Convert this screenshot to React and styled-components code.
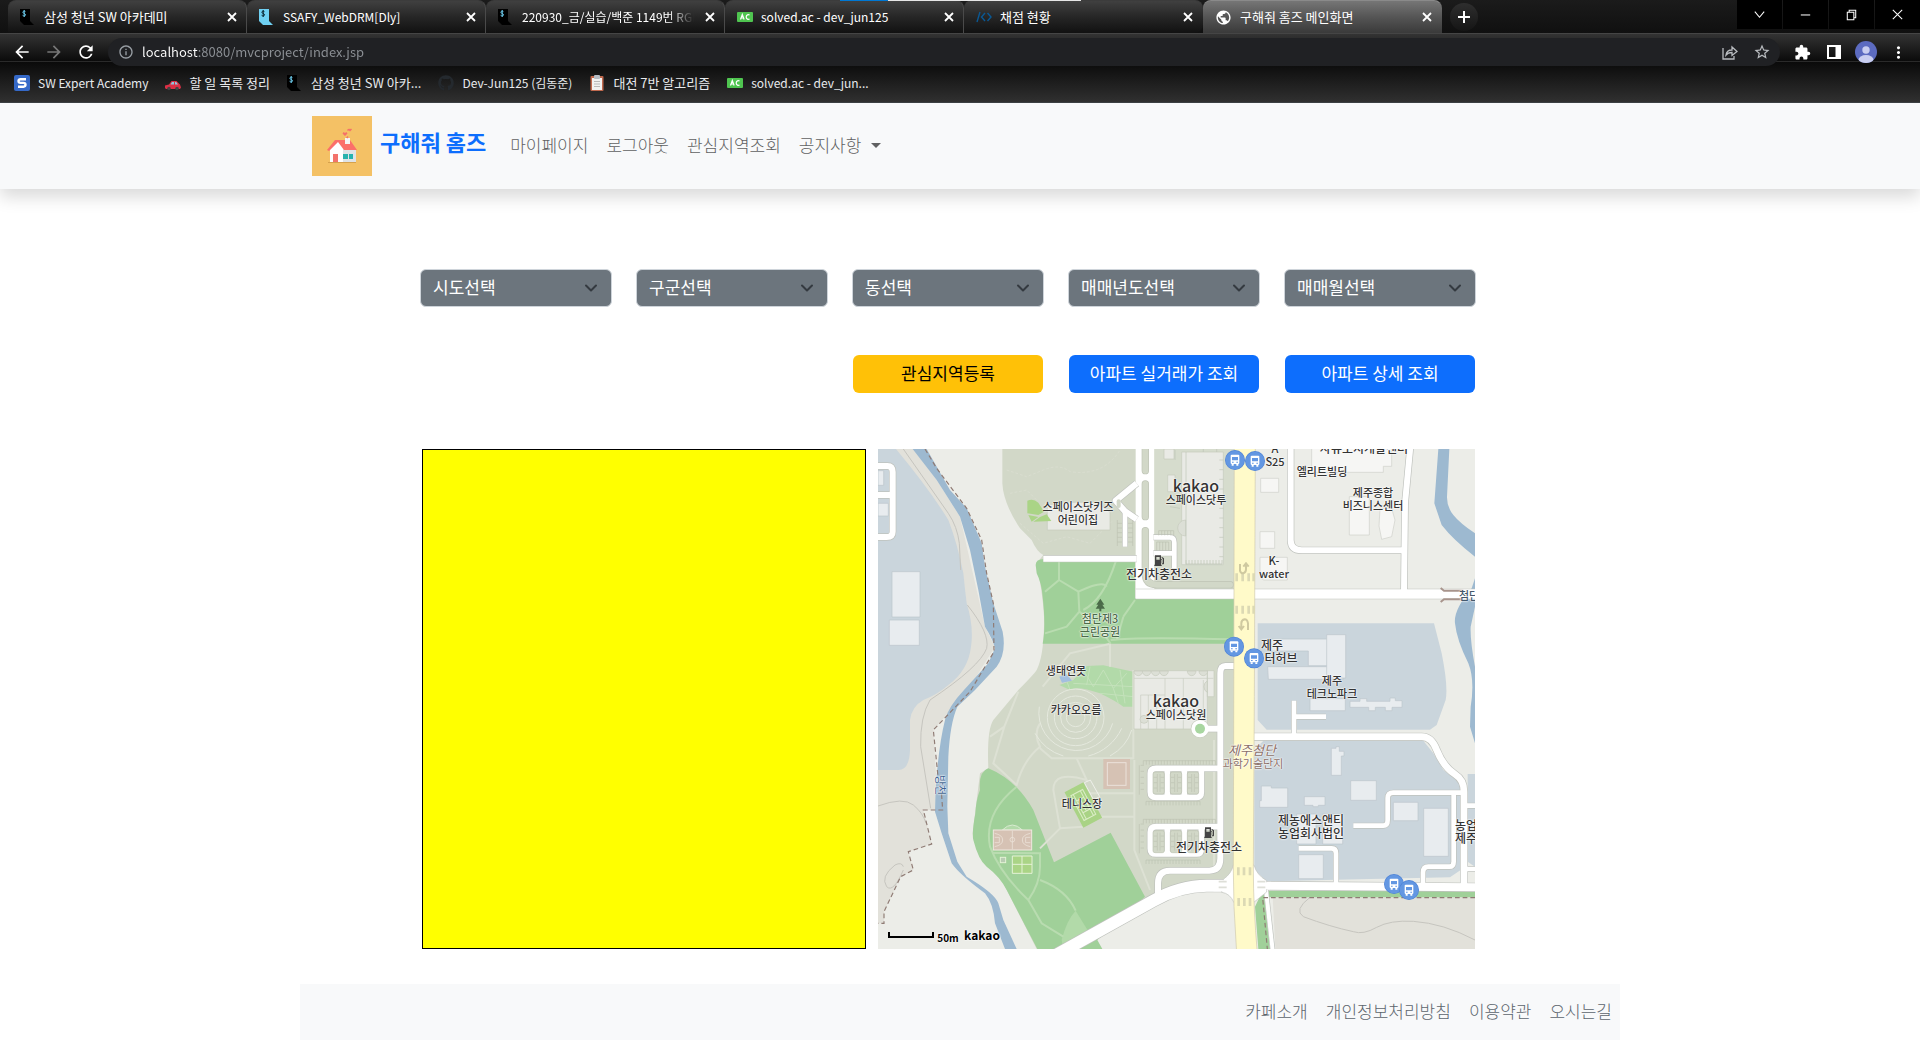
import React from "react";
import styled, { createGlobalStyle } from "styled-components";
import {
  MdArrowBack,
  MdArrowForward,
  MdRefresh,
  MdInfoOutline,
  MdStarBorder,
  MdExtension,
  MdMoreVert,
  MdPublic,
} from "react-icons/md";
import { FaGithub } from "react-icons/fa";

const GlobalStyle = createGlobalStyle`
  *, *::before, *::after { box-sizing: border-box; }
  body {
    margin: 0;
    background: #fff;
    color: #212529;
    font-family: "Noto Sans CJK KR", "Noto Sans", sans-serif;
    font-size: 17px;
    line-height: 24px;
  }
  button, select, input { font: inherit; }
  svg { display: block; }
`;

/* ---------- browser frame ---------- */

const Frame = styled.header`
  position: relative;
  color: #fff;
  font-size: 12px;
  line-height: 20px;
`;

const LoadBar = styled.div`
  position: absolute;
  top: 0;
  left: 840px;
  width: 241px;
  height: 1px;
  background: linear-gradient(90deg, #0078d4 48px, #e6e6e6 48px);
`;

const TabStrip = styled.div`
  display: flex;
  height: 33px;
  padding-left: 8px;
  background: linear-gradient(#1b1b1b, #101010);
`;

const TabItem = styled.div`
  display: flex;
  align-items: center;
  flex: 0 1 239px;
  min-width: 0;
  padding: 5px 6px 5px 12px;
  gap: 8px;
  border-top: 1px solid ${(p) => (p.$active ? "#8a8a8a" : "#3c3c3c")};
  border-right: 1px solid ${(p) => (p.$line ? "#4a4a4a" : "transparent")};
  border-radius: 8px 8px ${(p) => (p.$active || p.$line ? "0 0" : "8px 0")};
  background: ${(p) =>
    p.$active
      ? "linear-gradient(#767676, #555 50%, #3a3a3a)"
      : "linear-gradient(#404040, #262626 50%, #111)"};
`;

const TabTitle = styled.span`
  flex: 1;
  min-width: 0;
  overflow: hidden;
  white-space: nowrap;
  font-size: ${(p) => (p.$hangul ? 13 : 12)}px;
  ${(p) => p.$fade && "mask-image: linear-gradient(90deg, #000 85%, transparent);"}
`;

const IconButton = styled.button`
  display: grid;
  place-items: center;
  width: ${(p) => p.$w || 32}px;
  height: ${(p) => p.$h || 28}px;
  padding: 0;
  border: 0;
  border-radius: ${(p) => p.$round || 0}px;
  background: ${(p) => p.$bg || "none"};
  color: ${(p) => p.$color || "#fff"};
`;

const NewTab = styled.div`
  padding: 3px 8px;
`;

const WindowControls = styled.div`
  display: flex;
  gap: 1px;
  margin-left: auto;
`;

const BarArea = styled.div`
  border-top: 1px solid #454545;
  border-bottom: 1px solid #3c4043;
  background: linear-gradient(#333, #0b0b0b) 0 0 / 100% 27px no-repeat,
    linear-gradient(#2a2a2a, #2a2a2a) 0 27px / 100% 1px no-repeat,
    linear-gradient(#0a0a0a, #303030) 0 28px / 100% 40px no-repeat;
`;

const Toolbar = styled.div`
  display: flex;
  align-items: center;
  padding: 4px 6px 0;
`;

const Omnibox = styled.div`
  display: flex;
  align-items: center;
  flex: 1;
  height: 28px;
  margin: 0 6px;
  padding: 0 2px 0 10px;
  border-radius: 14px;
  background: #202124;
  color: #9aa0a6;
`;

const Address = styled.input.attrs({ type: "text" })`
  flex: 1;
  min-width: 0;
  height: 24px;
  margin-left: 8px;
  padding: 0 0 2px;
  border: 0;
  outline: 0;
  font-size: 13px;
  color: #9aa0a6;
  -webkit-text-fill-color: transparent;
  background: linear-gradient(90deg, #fff 56px, #8d9196 56px);
  background-clip: text;
`;

const Bookmarks = styled.nav`
  display: flex;
  height: 36px;
  padding: 0 14px 2px;
  gap: 17px;
  align-items: center;
`;

const Bookmark = styled.a`
  display: flex;
  align-items: center;
  gap: 8px;
  color: #e8eaed;
  font-size: ${(p) => (p.$hangul ? 13 : 12)}px;
  text-decoration: none;
  white-space: nowrap;
`;

const SsafyIcon = ({ page = "#000", ink = "#6fd0f2" }) => (
  <svg width="16" height="16" viewBox="0 0 16 16" aria-hidden="true">
    <path d="M0 0h10v12l4 4H4L0 12z" fill={page} />
    <path d="M5.400 2.600C4.600 1.800 2.900 2 2.900 3.300c0 1.400 2.600 1 2.600 2.500 0 1.300-2 1.400-2.900.5M4.200 1v7" fill="none" stroke={ink} />
  </svg>
);

const AcIcon = () => (
  <svg width="16" height="16" viewBox="0 0 16 16" aria-hidden="true">
    <rect y="3" width="16" height="10" rx="1" fill="#4fc550" />
    <path d="M3.500 10.500l1.800-5 1.800 5M4 9h2.500M12.500 6.200c-1-1-3.300-.6-3.300 1.800s2.300 2.800 3.300 1.800" fill="none" stroke="#fff" strokeWidth="1.200" />
  </svg>
);

const CodeIcon = () => (
  <svg width="16" height="16" viewBox="0 0 16 16" fill="none" stroke="#0a5894" strokeWidth="1.400" aria-hidden="true">
    <path d="M1 13L4 3M9 4L5.500 8l3.500 4M11.500 4L15 8l-3.500 4" />
  </svg>
);

const SweaIcon = () => (
  <svg width="16" height="16" viewBox="0 0 16 16" aria-hidden="true">
    <rect width="16" height="16" rx="2" fill="#3569c8" />
    <path d="M12 4.300H6.500q-2 0-2 1.800t2 1.800h3q2 0 2 1.900t-2 1.900H4" fill="none" stroke="#fff" strokeWidth="2.400" />
  </svg>
);

const CarIcon = () => (
  <svg width="16" height="16" viewBox="0 0 16 16" aria-hidden="true">
    <path d="M0 10.500l4-1L6.500 6h5L15 9.500l1 3-1 1.500H1L0 13z" fill="#dc2f45" />
    <path d="M5.500 9.500L7 7h2v2.500zM10 7h1.200L13 9.500h-3z" fill="#8fc6de" />
    <circle cx="4" cy="13.500" r="1.800" fill="#444" />
    <circle cx="12" cy="13.500" r="1.800" fill="#444" />
  </svg>
);

const ClipIcon = () => (
  <svg width="16" height="16" viewBox="0 0 16 16" aria-hidden="true">
    <rect x="1.500" y="1" width="13" height="15" rx="1" fill="#c0694e" />
    <rect x="3" y="3" width="10" height="12" fill="#f1f1f1" />
    <rect x="5" y="0" width="6" height="4" rx="1" fill="#b5bcc4" />
    <path d="M5 6.500h6M5 9h6M5 11.500h6" stroke="#b9b9b9" />
  </svg>
);

const TABS = [
  { title: "삼성 청년 SW 아카데미", icon: <SsafyIcon />, hangul: true },
  { title: "SSAFY_WebDRM[Dly]", icon: <SsafyIcon page="#6fd0f2" ink="#06202c" /> },
  { title: "220930_금/실습/백준 1149번 RGB거리", icon: <SsafyIcon />, fade: true },
  { title: "solved.ac - dev_jun125", icon: <AcIcon /> },
  { title: "채점 현황", icon: <CodeIcon />, hangul: true },
  { title: "구해줘 홈즈 메인화면", icon: <MdPublic size={17} />, active: true, hangul: true },
];

const BOOKMARKS = [
  { title: "SW Expert Academy", icon: <SweaIcon /> },
  { title: "할 일 목록 정리", icon: <CarIcon />, hangul: true },
  { title: "삼성 청년 SW 아카...", icon: <SsafyIcon />, hangul: true },
  { title: "Dev-Jun125 (김동준)", icon: <FaGithub size={16} color="#24292e" /> },
  { title: "대전 7반 알고리즘", icon: <ClipIcon />, hangul: true },
  { title: "solved.ac - dev_jun...", icon: <AcIcon /> },
];

const WINDOW_ICONS = [
  ["탭 검색", "M3 5l5 6 5-6"],
  ["최소화", "M3 8.500h10"],
  ["이전 크기로 복원", "M3.500 5.500h7v8h-7zM5.500 5.500v-2h7v8h-2"],
  ["창 닫기", "M3 3l10 10M13 3L3 13"],
];

function BrowserFrame() {
  return (
    <Frame>
      <TabStrip>
        {TABS.map((t, i) => (
          <TabItem key={t.title} $active={t.active} $line={i < 4}>
            {t.icon}
            <TabTitle $fade={t.fade} $hangul={t.hangul}>{t.title}</TabTitle>
            <IconButton $w={16} $h={16} aria-label="탭 닫기">
              <svg width="10" height="10" viewBox="0 0 10 10" stroke="#fff" strokeWidth="1.800">
                <path d="M1 1l8 8M9 1L1 9" />
              </svg>
            </IconButton>
          </TabItem>
        ))}
        <NewTab>
          <IconButton $w={28} $round={14} $bg="linear-gradient(#2e2e2e, #151515)" aria-label="새 탭">
            <svg width="12" height="12" viewBox="0 0 12 12" stroke="#fff" strokeWidth="2">
              <path d="M6 0v12M0 6h12" />
            </svg>
          </IconButton>
        </NewTab>
        <WindowControls>
          {WINDOW_ICONS.map(([name, d]) => (
            <IconButton key={name} $w={45} $h={29} $bg="#000" aria-label={name}>
              <svg width="15" height="15" viewBox="0 0 16 16" fill="none" stroke="#fff" strokeWidth="1.100">
                <path d={d} />
              </svg>
            </IconButton>
          ))}
        </WindowControls>
      </TabStrip>
      <LoadBar />
      <BarArea>
        <Toolbar>
          <IconButton aria-label="뒤로"><MdArrowBack size={20} /></IconButton>
          <IconButton $color="#777" aria-label="앞으로"><MdArrowForward size={20} /></IconButton>
          <IconButton aria-label="새로고침"><MdRefresh size={20} /></IconButton>
          <Omnibox>
            <MdInfoOutline size={16} />
            <Address aria-label="주소창" defaultValue="localhost:8080/mvcproject/index.jsp" />
            <IconButton $color="#b9bcc0" aria-label="공유">
              <svg width="16" height="16" viewBox="0 0 16 16" fill="none" stroke="currentColor" strokeWidth="1.300">
                <path d="M1 4v11h11v-3M4 11c.5-4 3-5 6-5V3l5 4.500-5 4V8.500c-3 0-4.500.5-6 2.500z" />
              </svg>
            </IconButton>
            <IconButton $color="#b9bcc0" aria-label="북마크에 추가"><MdStarBorder size={18} /></IconButton>
          </Omnibox>
          <IconButton aria-label="확장 프로그램"><MdExtension size={17} /></IconButton>
          <IconButton aria-label="측면 패널">
            <svg width="14" height="14" viewBox="0 0 14 14">
              <path fillRule="evenodd" d="M0 0h14v14H0zM2 2v10h6.500V2z" fill="#fff" />
            </svg>
          </IconButton>
          <IconButton aria-label="프로필">
            <svg width="22" height="22" viewBox="0 0 22 22">
              <clipPath id="avatar"><circle cx="11" cy="11" r="11" /></clipPath>
              <g clipPath="url(#avatar)">
                <rect width="22" height="22" fill="#5c6bc0" />
                <circle cx="11" cy="9" r="3.700" fill="#c9cef0" />
                <ellipse cx="11" cy="19" rx="7.500" ry="5" fill="#c9cef0" />
              </g>
            </svg>
          </IconButton>
          <IconButton aria-label="메뉴"><MdMoreVert size={19} /></IconButton>
        </Toolbar>
        <Bookmarks>
          {BOOKMARKS.map((b) => (
            <Bookmark key={b.title} href="#" $hangul={b.hangul}>{b.icon}{b.title}</Bookmark>
          ))}
        </Bookmarks>
      </BarArea>
    </Frame>
  );
}

/* ---------- site navigation ---------- */

const NavBar = styled.nav`
  background: #f8f9fa;
  box-shadow: 0 8px 16px rgba(0, 0, 0, 0.15);
`;

const NavInner = styled.div`
  display: flex;
  align-items: center;
  gap: 2px;
  max-width: 1320px;
  margin: 0 auto;
  padding: 13px 12px;
`;

const Brand = styled.a`
  display: flex;
  align-items: center;
  gap: 8px;
  margin-right: 14px;
  color: #0d6efd;
  font-size: 22px;
  font-weight: 700;
  line-height: 30px;
  text-decoration: none;
`;

const BrandName = styled.span`
  padding-bottom: 10px;
`;

const NavLink = styled.a`
  display: flex;
  align-items: center;
  gap: 10px;
  padding: 7px 8px 9px;
  color: #606162;
  font-weight: 300;
  text-decoration: none;
`;

const Caret = styled.span`
  border: 5px solid transparent;
  border-top-color: currentColor;
  border-bottom: 0;
`;

const HouseLogo = () => (
  <svg width="60" height="60" viewBox="0 0 60 60" aria-hidden="true">
    <rect width="60" height="60" fill="#f4c165" />
    <path d="M16 46h28v1H16z" fill="#d6a14c" />
    <path d="M18 33l8-9 6 9v13H18z" fill="#fff" />
    <path d="M31 33h13v13H31z" fill="#dfe3e6" />
    <path d="M23 24h15l7 10H32l-6-8-9 9-2-1z" fill="#fb6f6a" />
    <path d="M33 22h5v6h-5z" fill="#f4f4f4" />
    <path d="M21 38h5v8h-5z" fill="#f3736c" />
    <path d="M31 38h5v5h-5zM37 38h4v5h-4z" fill="#27b3ae" />
    <path d="M33 20l-2.500-2.500 1.200-1.500 1.300 1 1.300-1 1.200 1.500zM38 15.500L36 13.500l1-1 1 .8 1-.8 1 1zM34 21.500l1.500-1.500 1 1-1 1.500zM35 14l1-1 1 1-1 1z" fill="#f4706a" />
  </svg>
);

/* ---------- page body ---------- */

const Main = styled.main`
  max-width: 1320px;
  margin: 0 auto;
  padding: 80px 144px 35px 120px;
`;

const FilterGrid = styled.div`
  display: grid;
  grid-template-columns: repeat(5, 1fr);
  gap: 48px 24px;
`;

const SelectBox = styled.div`
  position: relative;
`;

const Select = styled.select`
  appearance: none;
  display: block;
  width: 100%;
  height: 38px;
  padding: 0 36px 2px 12px;
  border: 1px solid #ced4da;
  border-radius: 6px;
  background: #6c757d;
  color: #fff;
`;

const SelectArrow = styled.svg`
  position: absolute;
  top: 13px;
  right: 13px;
  pointer-events: none;
`;

const ActionButton = styled.button`
  grid-column-start: ${(p) => p.$column};
  height: 38px;
  margin: 0 1px;
  padding: 0 12px 2px;
  border: 0;
  border-radius: 6px;
  background: ${(p) => (p.$warning ? "#ffc107" : "#0d6efd")};
  color: ${(p) => (p.$warning ? "#000" : "#fff")};
  white-space: nowrap;
`;

const Panels = styled.section`
  display: grid;
  grid-template-columns: 444fr 597fr;
  gap: 12px;
  margin-top: 56px;
  padding: 0 1px 0 2px;
`;

const ResultPanel = styled.div`
  border: 1px solid #000;
  background: #ff0;
`;

const MapPanel = styled.div`
  position: relative;
  height: 500px;
  overflow: hidden;
  background: #ecede8;
`;

const MapLabel = styled.span`
  position: absolute;
  transform: translate(-50%, -50%);
  color: ${(p) => p.$color || "#333"};
  font-size: ${(p) => p.$size || 11}px;
  font-weight: ${(p) => p.$weight || 500};
  font-style: ${(p) => (p.$italic ? "italic" : "normal")};
  writing-mode: ${(p) => (p.$vertical ? "vertical-rl" : "horizontal-tb")};
  text-orientation: sideways;
  line-height: 13px;
  text-align: center;
  white-space: pre;
  text-shadow: 0 0 2px #fff, 0 0 2px #fff, 0 0 1px #fff;
`;

const FooterBar = styled.footer`
  display: flex;
  justify-content: flex-end;
  flex-wrap: wrap;
  gap: 18px;
  max-width: 1320px;
  margin: 0 auto;
  padding: 15px 8px 17px;
  background: #f8f9fa;
`;

const FooterLink = styled.a`
  color: #5c656d;
  font-weight: 300;
  text-decoration: none;
`;

/* ---------- map drawing ---------- */

const LAND = "#d2d8c8";
const GREEN = "#a0d099";
const BLUE = "#cad5dc";
const RIVER = "#9db9d0";
const BEIGE = "#e2e1da";

const ROADS = [
  [18, "M24 78H52Q68 78 68 96V275Q68 291 50 291H24M24 165H66"],
  [18, "M520 356H800"],
  [14, "M765 214V320"],
  [18, "M800 130L737 182L765 214L800 238"],
  [14, "M850 292H900Q913 292 913 308V385M850 340H913"],
  [18, "M1262 20V300Q1262 331 1295 331H1600"],
  [18, "M1621 20L1605 190L1602 455"],
  [28, "M797 462H1830"],
  [20, "M1150 890H1655Q1685 890 1700 930Q1720 980 1755 1003Q1782 1020 1782 1055V1340"],
  [14, "M1272 782V888M1272 830H1368"],
  [14, "M1450 1157H1540Q1553 1157 1553 1140V1075Q1553 1058 1570 1058H1780"],
  [14, "M1751 1062V1265Q1751 1280 1738 1280H1675Q1659 1280 1659 1298V1335"],
  [14, "M1286 1225H1385Q1398 1225 1398 1240V1335"],
  [14, "M1785 1097H1830M1785 1287H1830"],
  [18, "M1095 678H1066Q1051 678 1051 700V1255Q1051 1292 1018 1292H900Q864 1292 864 1330V1362"],
  [18, "M990 866H1050"],
  [17, "M1050 985H858Q841 985 841 1000V1056Q841 1072 858 1072H980Q994 1072 994 1056V985M892 985V1072M943 985V1072"],
  [17, "M1050 1160H858Q841 1160 841 1176V1226Q841 1242 858 1242H980Q994 1242 994 1226V1160M892 1160V1242M943 1160V1242"],
  [36, "M520 1566L850 1382Q930 1337 1010 1337H1100"],
  [24, "M1145 1337L1300 1338L1830 1342"],
  [12, "M1188 1350L1209 1540"],
];

const COMMERCIAL = [
  "M1172 115h54v42h-54zM1170 275h44v50h-44zM1170 352h82v68h-72l-10-12z",
  "M1438 170h60v115h-60zM1530 205h35l10 35-10 50-30 8-8-40z",
  "M1325 20h240v59h-25v18h-215z",
];

const BUILDINGS = [
  "M66 395h84v136H66zM58 540h90v76H58zM24 92h17v44H24zM24 190h31v38H24z",
  "M1195 597h217v15l-32 10 27 55h-92v-44h-120zM1193 680h210l17 38h-225z",
  "M1370 584h57v130h-57zM1320 776h106v36h-106zM1440 784h30v-8h20v8h70v-10h16v8h20v20h-30v10h-20v-10h-30v10h-20v-10h-56z",
  "M1384 925h14v-5h10v14h14v14h-8v58h-30zM1442 1022h77v59h-77z",
  "M1174 1038h30v6h49v58h-84v-20h5zM1303 1070h62v26h-20v4h-16v-4h-26z",
  "M1570 1087h74v55h-74zM1661 1105h74v144h-74zM1286 1244h74v72h-74z",
  "M1280 1122h58v90h-58zM1358 1122h60v90h-60z",
];

const CAMPUS = [
  "M792 692h220v175H792zM1012 692h20v78h-20z",
  "M935 36h125v338H935z",
  "M532 195l60-8h90l38 30v53H532z",
  "M882 27h30v30h-30zM893 105h22v50h-22z",
];

const Road = ({ w, d, color }) => (
  <path d={d} fill="none" stroke={color} strokeWidth={w} strokeLinejoin="round" />
);

const STOPS = [[1095, 60], [1155, 63], [1092, 620], [1152, 655], [1572, 1332], [1617, 1350]];

const BusStop = ({ x, y }) => (
  <g transform={`translate(${x} ${y})`}>
    <circle r="30" fill="#4f83d6" />
    <circle r="28" fill="#6397e2" />
    <rect x="-13" y="-16" width="26" height="28" rx="3" fill="#fff" />
    <path d="M-10 12h6v5h-6zM4 12h6v5h-6z" fill="#fff" />
    <path d="M-9 -9H9V1H-9zM-9 5h5v3h-5zM4 5h5v3h-5z" fill="#6397e2" />
  </g>
);

const Charger = ({ x, y }) => (
  <path
    transform={`translate(${x} ${y})`}
    fillRule="evenodd"
    fill="#444"
    d="M2 0H20V28H22V32H0V28H2zM6 5V13H16V5zM22 4L29 9V25Q25 30 22 24V14H20V12H24V24H26V11L22 8z"
  />
);

const Comb = ({ x, y, n, h, step = 9 }) => (
  <path
    d={`M${x} ${y}h${n * step}` + Array.from({ length: n + 1 }, (_, i) => `M${x + i * step} ${y}v${h}`).join("")}
    fill="none"
    stroke="#bcc2b2"
    strokeWidth="2"
  />
);

function MapDrawing() {
  return (
    <svg width="100%" height="100%" viewBox="24 27 1791 1500" preserveAspectRatio="xMidYMid slice" aria-hidden="true">
      <rect x="-400" width="2600" height="1600" fill="#ecede8" />

      <path fill={BEIGE} d="M24 27H130L200 120L270 230L345 560L375 620L290 755L190 870L204 1110H160L185 1212L115 1235L130 1290L92 1310L42 1415V1450H24z" />
      <path fill={BLUE} d="M24 27H78Q180 150 235 240Q262 310 280 400Q285 450 290 490Q312 560 303 620Q295 690 235 735Q200 765 160 780Q125 800 120 840V930Q118 990 85 990H24z" />
      <path fill="none" stroke="#c6c5bf" strokeWidth="3" d="M100 27L235 220Q262 260 268 310L272 390M292 495Q360 580 350 625Q330 680 180 780Q150 830 152 920L182 1105M24 1098Q100 1070 130 1095Q160 1120 168 1150M100 1280Q95 1265 75 1275Q30 1310 50 1340Q70 1360 100 1290" />
      <path fill={RIVER} d="M128 27L200 120L270 230L300 330L325 450L345 560Q370 600 375 625L355 670L282 750Q235 800 225 840Q205 920 197 1050L195 1115L215 1180L245 1270Q270 1305 345 1360Q370 1390 375 1450L405 1527H440L400 1440L385 1390Q375 1360 290 1310L262 1265L235 1180L232 1100L235 950Q240 850 262 800L315 750L380 680Q410 640 398 575L370 490L345 380L335 310L290 205L240 150L170 27z" />
      <path fill={RIVER} d="M1705 27L1693 190L1715 255Q1750 300 1815 350V280Q1770 250 1750 225Q1730 200 1731 170L1738 27zM1815 415L1805 445Q1750 510 1755 550Q1760 600 1795 670Q1815 720 1802 800L1800 860L1815 910V680Q1800 600 1802 560L1815 500z" />

      <path fill={LAND} d="M397 27V130Q400 190 450 265L485 300Q500 335 520 345L500 370Q525 500 522 560Q520 650 500 690Q490 705 445 750L370 840Q350 870 355 985L330 1000L308 1180Q310 1220 400 1330L500 1527H560L850 1370L1092 1330V27z" />
      <path fill={GREEN} d="M497 375Q497 357 522 357H795V475H1092V611H518Q528 560 518 470Q515 430 500 400z" />
      <path fill={GREEN} d="M355 985Q325 995 330 1050Q318 1080 316 1120Q305 1180 310 1200Q325 1260 350 1280Q390 1310 410 1350L502 1527H697L682 1500L825 1370L722 1178L552 1267L490 1110Q440 1020 355 985z" />
      <path fill="#b2daa9" d="M568 735L610 720L650 678L700 676L790 695V800H760Q740 785 690 760Q620 735 600 750zM575 1500Q590 1440 617 1412L665 1490L610 1527H580z" />
      <path fill="none" stroke="#c4e2bb" strokeWidth="3" d="M640 690L670 740L700 690L730 745L770 700M610 730L790 740M690 760L790 770M730 745L745 790M660 680L650 735M750 690L765 790M590 722L600 750" />
      <path fill="#a2bfe0" d="M568 710l22-8 16 20-30 6z" />

      <path fill="none" stroke="#b9dcb0" strokeWidth="6" d="M567 365V420L525 455M567 420L625 455Q700 420 710 440M737 365Q700 480 640 510M625 455L628 515L590 560L525 580M628 515Q690 560 722 611M760 530L795 480M760 530L740 600M722 600Q800 590 1092 598M440 1040Q340 1120 360 1220Q390 1300 475 1380Q510 1330 510 1280V1240L370 1238M475 1380L515 1450L580 1490M510 1320Q590 1350 617 1412" />
      <path fill="none" stroke="#dde1d4" strokeWidth="6" d="M720 611V680M518 740L600 640L718 612M360 890L403 860M445 755L403 860L370 970L440 1035Q460 960 510 920Q490 880 510 850M510 925L545 955H790V690M620 955L650 1020Q550 990 550 1050L570 1165L510 1225M570 1165L640 1160M690 1130H795M660 1060H795M793 960V1230L840 1350M1032 1300V900" />
      <g fill="none" stroke="#e5e9de" strokeWidth="3">
        <circle cx="617" cy="832" r="28" />
        <circle cx="617" cy="832" r="45" />
        <circle cx="617" cy="832" r="64" />
        <circle cx="617" cy="832" r="85" />
        <path d="M508 800A113 113 0 0 0 728 850M495 880A145 145 0 0 0 580 948M655 948A150 150 0 0 0 755 865M720 948Q770 920 785 870" />
      </g>
      <path fill="none" stroke="#dce0d3" strokeWidth="2" strokeDasharray="8 6" d="M410 90L470 110L520 90Q570 70 600 95Q700 110 750 30M420 160L470 150L500 180M450 250L520 310L590 290L660 310L730 240" />

      <path fill={BLUE} d="M1163 550H1692L1715 640Q1735 740 1727 780L1700 855L1680 869H1190L1163 840zM1180 902H1660L1690 940L1720 990L1772 1030V1290L1740 1312L1190 1324L1153 1290V930zM1793 1002H1815V1280L1793 1265z" />
      <path fill={BEIGE} d="M1208 1372H2200V1600H1220z" />
      <path fill={GREEN} d="M1195 1352H2200V1372H1195zM1155 1400L1172 1364H1182L1200 1527H1165z" />
      <path fill="none" stroke="#c6c5bf" strokeWidth="3" d="M1320 1372Q1270 1410 1300 1430Q1380 1460 1450 1475Q1480 1485 1520 1462Q1560 1440 1630 1444Q1720 1450 1815 1500" />

      <path d="M797 27H853V475H797z" fill="#fff" />
      <path fill="#d6dccd" d="M854 27H1092V420L1076 435H870L854 400z" />
      <path fill="none" stroke="#bfc4b6" strokeWidth="22" d="M826 20V92M826 132V230M826 272V400Q826 434 860 434H1080" strokeLinecap="round" />
      <path fill="none" stroke={LAND} strokeWidth="18" d="M826 20V92M826 132V230M826 272V400Q826 434 860 434H1080" strokeLinecap="round" />

      {COMMERCIAL.map((d) => <path key={d} d={d} fill="#f6f6f4" stroke="#cfd0ca" strokeWidth="2" />)}
      {BUILDINGS.map((d) => <path key={d} d={d} fill="#e8ecef" stroke="#bcc5cc" strokeWidth="2" />)}
      {CAMPUS.map((d) => <path key={d} d={d} fill="#e9eae5" stroke="#c5cabd" strokeWidth="2" />)}
      <path fill="#aad486" d="M472 182Q490 174 505 188L522 215L505 225L472 220zM475 225l30 6-20 14zM490 245l20-14 20-8 14 20z" />
      <path fill="none" stroke="#c8ccc1" strokeWidth="2" d="M792 715H1030M885 715V867M940 715V867M812 765H885M812 765V867M835 765V867M860 765V867M1000 720V867" />
      <g fill="#dcdfd6" stroke="#c5cabd" strokeWidth="2">
        {[805, 830, 857, 882, 965, 1000].map((x) => <path key={x} d={`M${x - 13} 693A13 14 0 0 0 ${x + 13} 693z`} />)}
        <path d="M1012 723A15 18 0 0 0 1012 757z" />
        <circle cx="822" cy="838" r="12" />
        <path d="M947 240A24 24 0 0 0 947 288z" />
      </g>
      <path fill="none" stroke="#c0c5b8" strokeWidth="2" d="M915 30V60M948 36V374M1000 27V36M1040 27V36M900 200L930 205" />
      <Comb x={948} y={372} n={12} h={-12} />
      {[0, 1, 2, 3, 4, 5, 6, 7, 8, 9, 10].map((i) => (
        <path key={i} d={`M1048 ${60 + i * 29}h12`} stroke="#c0c5b8" strokeWidth="2" />
      ))}

      {ROADS.map(([w, d]) => <Road key={d} d={d} w={w + 4} color="#bfc2bd" />)}
      <circle cx="990" cy="866" r="28" fill="#c9cec0" />
      {ROADS.map(([w, d]) => <Road key={d} d={d} w={w} color="#fff" />)}
      <circle cx="990" cy="866" r="26" fill="#fff" />
      <circle cx="990" cy="866" r="15" fill="#a8d6a0" />
      <path fill="#fff" stroke="#bfc2bd" strokeWidth="2" d="M1060 1318Q1085 1300 1090 1275H1152Q1160 1305 1190 1322V1356L1150 1388H1092Q1080 1360 1055 1357z" />
      <path fill="#fff" d="M1030 1321H1070V1354H1030zM1180 1327H1200V1348H1180z" />

      {[[808, 962], [808, 1138]].map(([x, y]) => (
        <g key={y}>
          <Comb x={x + 12} y={y} n={24} h={12} />
          <Comb x={x + 20} y={y + 122} n={18} h={12} />
          <path d={`M${x} ${y + 14}v88M${x + 4} ${y + 14}h10M${x + 4} ${y + 32}h10M${x + 4} ${y + 50}h10M${x + 4} ${y + 68}h10M${x + 4} ${y + 86}h10`} stroke="#bcc2b2" strokeWidth="2" />
          {[848, 900, 951].map((c) => (
            <g key={c} fill={LAND} stroke="#bcc2b2" strokeWidth="2">
              <rect x={c + 1} y={y + 34} width="34" height="66" rx="6" />
              <path d={`M${c + 14} ${y + 40}v54M${c + 22} ${y + 40}v54M${c + 3} ${y + 50}h10M${c + 3} ${y + 66}h10M${c + 3} ${y + 82}h10M${c + 24} ${y + 50}h10M${c + 24} ${y + 66}h10M${c + 24} ${y + 82}h10`} />
            </g>
          ))}
        </g>
      ))}
      <Comb x={866} y={272} n={5} h={14} />
      <Comb x={860} y={306} n={4} h={26} />
      <path d="M742 240v78M742 250h14M742 264h14M742 278h14M742 292h14M742 306h14M788 240v78M774 250h14M774 264h14M774 278h14M774 292h14M774 306h14" stroke="#bcc2b2" strokeWidth="2" />
      <rect x="740" y="178" width="12" height="26" rx="6" fill={LAND} />
      <path d="M795 155Q770 165 775 195L795 212z" fill={LAND} />

      <path fill="#fffac9" stroke="#cfc9ad" strokeWidth="2" d="M1093 20H1156L1153 770L1150 1290Q1150 1400 1162 1540H1100L1092 1400L1090 1290z" />
      <g stroke="#dcd9b4" strokeWidth="8">
        <path d="M1100 400v24M1118 400v24M1136 400v24M1151 400v24M1100 497v24M1118 497v24M1136 497v24M1151 497v24M1105 1282v24M1122 1282v24M1140 1282v24M1106 1374v24M1123 1374v24M1140 1374v24" />
        <path d="M1046 1325h24M1046 1342h24M1162 1325h24M1162 1342h24" strokeWidth="5" stroke="#dedfd8" />
      </g>
      <path fill="none" stroke="#cfc9a0" strokeWidth="6" d="M1110 372V392Q1112 400 1120 400Q1128 398 1128 388V372M1120 380L1128 370L1136 380M1134 570V550Q1132 538 1124 538Q1114 540 1114 550V566M1106 558L1114 568L1122 558" />

      <rect x="700" y="957" width="80" height="90" fill="#d6c2b4" />
      <rect x="712" y="968" width="56" height="68" fill="none" stroke="#ebe2da" strokeWidth="3" />
      <path d="M643 1028l18-8 28 50-18 10z" fill="none" stroke="#eef0ea" strokeWidth="3" />
      <g transform="translate(640 1095) rotate(-28)">
        <rect x="-32" y="-60" width="64" height="120" fill="#a9d385" />
        <path d="M-20 -42H20V42H-20zM-12 -42V42M12 -42V42M-20 0H20M-12 -20H12M-12 20H12M0 -20V20" fill="none" stroke="#dcedc8" strokeWidth="3" />
      </g>
      <path d="M397 1170Q427 1140 457 1170z" fill="#b2daa9" stroke="#d8ebd0" strokeWidth="3" />
      <rect x="370" y="1170" width="115" height="60" fill="#d6c2b4" stroke="#f0e8e0" strokeWidth="3" />
      <path d="M427 1172V1228M374 1180Q398 1185 398 1200Q398 1215 374 1220M481 1180Q457 1185 457 1200Q457 1215 481 1220M374 1192h14v16h-14M481 1192h-14v16h14" fill="none" stroke="#f0e8e0" strokeWidth="2" />
      <circle cx="427" cy="1199" r="7" fill="none" stroke="#f0e8e0" strokeWidth="2" />
      <path d="M427 1248h59v52h-59zM427 1273h59M456 1248v52" fill="#aad486" stroke="#e4f2d6" strokeWidth="3" />
      <rect x="391" y="1252" width="16" height="16" fill="#b9ccb3" stroke="#e4f2d6" strokeWidth="3" />

      <path fill="none" stroke="#8f7b74" strokeWidth="3.500" strokeDasharray="14 9" d="M165 27L200 85L290 205L335 300L350 400L370 490L372 635L300 755L190 870L204 1010M213 1040L218 1110H160L185 1212L115 1235L130 1290L92 1310L42 1415V1450H24M1815 1373H1178L1192 1527" />
      <path fill="none" stroke="#a8948c" strokeWidth="6" d="M1712 444L1722 452H1780M1712 486L1722 478H1780" />

      <path fill="#4b6a49" d="M691 476L703 494H697L705 506H694V514H688V506H677L685 494H679z" />
      <Charger x={853} y={346} />
      <Charger x={1003} y={1162} />
      {STOPS.map(([x, y]) => <BusStop key={x} x={x} y={y} />)}
      <path d="M57 1476V1491H189V1476" fill="none" stroke="#000" strokeWidth="6" />
    </svg>
  );
}

const LABELS = [
  { x: 200, y: 64, text: "스페이스닷키즈\n어린이집" },
  { x: 318, y: 36, text: "kakao", size: 16 },
  { x: 318, y: 50, text: "스페이스닷투" },
  { x: 281, y: 124, text: "전기차충전소", size: 12 },
  { x: 222, y: 176, text: "첨단제3\n근린공원", color: "#4c6b4a" },
  { x: 188, y: 221, text: "생태연못" },
  { x: 198, y: 260, text: "카카오오름" },
  { x: 298, y: 251, text: "kakao", size: 16 },
  { x: 298, y: 265, text: "스페이스닷원" },
  { x: 397, y: 6, text: "A\nS25" },
  { x: 486, y: -2, text: "자유도시개발센터", size: 12 },
  { x: 444, y: 22, text: "엘리트빌딩" },
  { x: 495, y: 50, text: "제주종합\n비즈니스센터" },
  { x: 396, y: 118, text: "K-\nwater" },
  { x: 394, y: 195, text: "제주", size: 12 },
  { x: 403, y: 208, text: "터허브", size: 12 },
  { x: 454, y: 238, text: "제주\n테크노파크" },
  { x: 591, y: 146, text: "첨단", color: "#44586c" },
  { x: 374, y: 300, text: "제주첨단", size: 13, color: "#8b6f67", italic: true, weight: 400 },
  { x: 375, y: 314, text: "과학기술단지", color: "#8b6f67", weight: 400 },
  { x: 204, y: 354, text: "테니스장" },
  { x: 331, y: 397, text: "전기차충전소", size: 12 },
  { x: 433, y: 377, text: "제농에스앤티\n농업회사법인", size: 12 },
  { x: 588, y: 382, text: "농업\n제주", size: 12 },
  { x: 62, y: 336, text: "방천", color: "#3f6390", vertical: true, weight: 400 },
  { x: 70, y: 488, text: "50m", size: 10, weight: 700, color: "#000" },
  { x: 104, y: 485, text: "kakao", size: 12, weight: 700, color: "#000" },
];

const FILTERS = [
  ["sido", "시도선택"],
  ["gugun", "구군선택"],
  ["dong", "동선택"],
  ["year", "매매년도선택"],
  ["month", "매매월선택"],
];

export default function App() {
  return (
    <>
      <GlobalStyle />
      <BrowserFrame />
      <NavBar>
        <NavInner>
          <Brand href="#">
            <HouseLogo />
            <BrandName>구해줘 홈즈</BrandName>
          </Brand>
          <NavLink href="#">마이페이지</NavLink>
          <NavLink href="#">로그아웃</NavLink>
          <NavLink href="#">관심지역조회</NavLink>
          <NavLink href="#">공지사항<Caret /></NavLink>
        </NavInner>
      </NavBar>
      <Main>
        <FilterGrid>
          {FILTERS.map(([id, name]) => (
            <SelectBox key={id}>
              <Select id={id} aria-label={name} defaultValue="">
                <option value="">{name}</option>
              </Select>
              <SelectArrow width="16" height="12" viewBox="0 0 16 12" fill="none" stroke="#343a40" strokeWidth="2" strokeLinecap="round" strokeLinejoin="round">
                <path d="M3 3.500l5 5 5-5" />
              </SelectArrow>
            </SelectBox>
          ))}
          <ActionButton $warning $column={3}>관심지역등록</ActionButton>
          <ActionButton $column={4}>아파트 실거래가 조회</ActionButton>
          <ActionButton $column={5}>아파트 상세 조회</ActionButton>
        </FilterGrid>
        <Panels>
          <ResultPanel />
          <MapPanel>
            <MapDrawing />
            {LABELS.map((l) => (
              <MapLabel
                key={l.text + l.y}
                $size={l.size}
                $weight={l.weight}
                $color={l.color}
                $italic={l.italic}
                $vertical={l.vertical}
                style={{ left: l.x, top: l.y }}
              >
                {l.text}
              </MapLabel>
            ))}
          </MapPanel>
        </Panels>
      </Main>
      <FooterBar>
        <FooterLink href="#">카페소개</FooterLink>
        <FooterLink href="#">개인정보처리방침</FooterLink>
        <FooterLink href="#">이용약관</FooterLink>
        <FooterLink href="#">오시는길</FooterLink>
      </FooterBar>
    </>
  );
}
